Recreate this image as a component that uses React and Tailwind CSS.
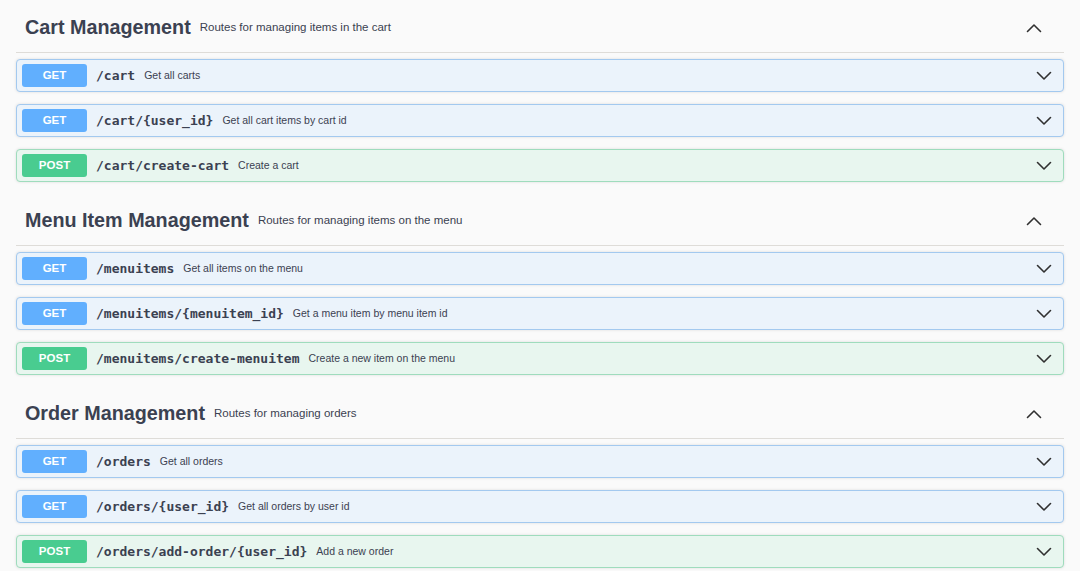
import React from "react";

const sections = [
  {
    title: "Cart Management",
    description: "Routes for managing items in the cart",
    ops: [
      { method: "GET", path: "/cart", summary: "Get all carts" },
      { method: "GET", path: "/cart/{user_id}", summary: "Get all cart items by cart id" },
      { method: "POST", path: "/cart/create-cart", summary: "Create a cart" },
    ],
  },
  {
    title: "Menu Item Management",
    description: "Routes for managing items on the menu",
    ops: [
      { method: "GET", path: "/menuitems", summary: "Get all items on the menu" },
      { method: "GET", path: "/menuitems/{menuitem_id}", summary: "Get a menu item by menu item id" },
      { method: "POST", path: "/menuitems/create-menuitem", summary: "Create a new item on the menu" },
    ],
  },
  {
    title: "Order Management",
    description: "Routes for managing orders",
    ops: [
      { method: "GET", path: "/orders", summary: "Get all orders" },
      { method: "GET", path: "/orders/{user_id}", summary: "Get all orders by user id" },
      { method: "POST", path: "/orders/add-order/{user_id}", summary: "Add a new order" },
    ],
  },
];

const ChevronDown = () => (
  <svg width="16" height="10" viewBox="0 0 16 10" fill="none">
    <path d="M1.5 1.5 L8 8 L14.5 1.5" stroke="#303030" strokeWidth="1.6" strokeLinecap="round" strokeLinejoin="round" />
  </svg>
);

const ChevronUp = () => (
  <svg width="16" height="10" viewBox="0 0 16 10" fill="none">
    <path d="M1.5 8.5 L8 2 L14.5 8.5" stroke="#303030" strokeWidth="1.6" strokeLinecap="round" strokeLinejoin="round" />
  </svg>
);

const OpRow = ({ op }) => {
  const isGet = op.method === "GET";
  return (
    <div
      className={`flex items-center h-[33px] px-[5px] rounded-[4px] border shadow-[0_0_3px_rgba(0,0,0,0.12)] ${
        isGet ? "bg-[#ebf3fb] border-[#a3c9ef]" : "bg-[#e8f6ef] border-[#9fdcbd]"
      }`}
    >
      <div
        className={`w-[65px] h-[23px] rounded-[3px] flex items-center justify-center text-white font-bold text-[11.5px] ${
          isGet ? "bg-[#61affe]" : "bg-[#49cc90]"
        }`}
      >
        {op.method}
      </div>
      <span className="pl-[9px] pr-[9px] font-bold text-[13px] text-[#3b4151] font-['DejaVu_Sans_Mono',monospace]">
        {op.path}
      </span>
      <span className="text-[10.5px] text-[#3b4151]">{op.summary}</span>
      <div className="ml-auto mr-[6px] flex items-center">
        <ChevronDown />
      </div>
    </div>
  );
};

export default function App() {
  return (
    <div className="min-h-screen bg-[#fafafa] px-4 font-['Liberation_Sans',Arial,sans-serif]">
      {sections.map((section) => (
        <div key={section.title} className="mb-[11px]">
          <div className="flex items-center h-[53px] pt-[4px] border-b border-[#dedcd8] pl-[9px] pr-[22px]">
            <span className="text-[19.75px] font-bold text-[#3b4151]">{section.title}</span>
            <span className="ml-[9px] text-[11.5px] text-[#3b4151]">{section.description}</span>
            <div className="ml-auto flex items-center">
              <ChevronUp />
            </div>
          </div>
          <div className="mt-[6px] flex flex-col gap-[12px]">
            {section.ops.map((op) => (
              <OpRow key={op.path} op={op} />
            ))}
          </div>
        </div>
      ))}
    </div>
  );
}
